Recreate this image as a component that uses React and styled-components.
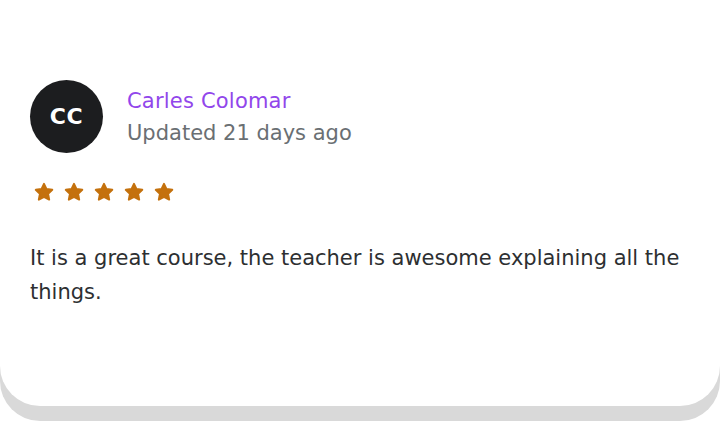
import React from "react";
import styled, { createGlobalStyle } from "styled-components";

const GlobalStyle = createGlobalStyle`
  body {
    margin: 0;
    background: #ffffff;
  }
`;

const Page = styled.div`
  width: 720px;
  height: 422px;
  padding-bottom: 16px;
  box-sizing: border-box;
`;

const Card = styled.div`
  box-sizing: border-box;
  width: 720px;
  height: 406px;
  background: #ffffff;
  border-radius: 40px;
  box-shadow: 0 15px 0 #d9d9d9;
  padding: 80px 30px 0 30px;
  display: flex;
  flex-direction: column;
`;

const Header = styled.div`
  display: flex;
  align-items: center;
  gap: 24px;
`;

const Avatar = styled.div`
  width: 73px;
  height: 73px;
  border-radius: 50%;
  background: #1c1d1f;
  color: #ffffff;
  display: flex;
  align-items: center;
  justify-content: center;
  font-family: "DejaVu Sans", sans-serif;
  font-weight: bold;
  font-size: 22px;
  letter-spacing: 0.5px;
`;

const Info = styled.div`
  display: flex;
  flex-direction: column;
  font-family: "DejaVu Sans", sans-serif;
  font-size: 21px;
  line-height: 32px;
`;

const Name = styled.div`
  color: #9146eb;
  letter-spacing: 0.2px;
`;

const Updated = styled.div`
  color: #6a6f73;
`;

const Stars = styled.div`
  display: flex;
  gap: 10px;
  margin-top: 29px;
  padding-left: 4px;
`;

const Star = styled.svg`
  width: 20px;
  height: 20px;
  fill: #c4710d;
`;

const Comment = styled.p`
  margin: 39px 0 0 0;
  font-family: "DejaVu Sans", sans-serif;
  font-size: 21px;
  line-height: 34px;
  color: #2d2f31;
`;

const StarIcon = () => (
  <Star viewBox="0 0 24 24">
    <path
      d="M12 2.2l3 6.3 6.9.9-5 4.8 1.3 6.9L12 17.8l-6.2 3.3 1.3-6.9-5-4.8 6.9-.9z"
      strokeLinejoin="round"
      stroke="#c4710d"
      strokeWidth="2.4"
    />
  </Star>
);

export default function App() {
  return (
    <>
      <GlobalStyle />
      <Page>
        <Card>
          <Header>
            <Avatar>CC</Avatar>
            <Info>
              <Name>Carles Colomar</Name>
              <Updated>Updated 21 days ago</Updated>
            </Info>
          </Header>
          <Stars>
            {[0, 1, 2, 3, 4].map((i) => (
              <StarIcon key={i} />
            ))}
          </Stars>
          <Comment>
            It is a great course, the teacher is awesome explaining all the
            things.
          </Comment>
        </Card>
      </Page>
    </>
  );
}
